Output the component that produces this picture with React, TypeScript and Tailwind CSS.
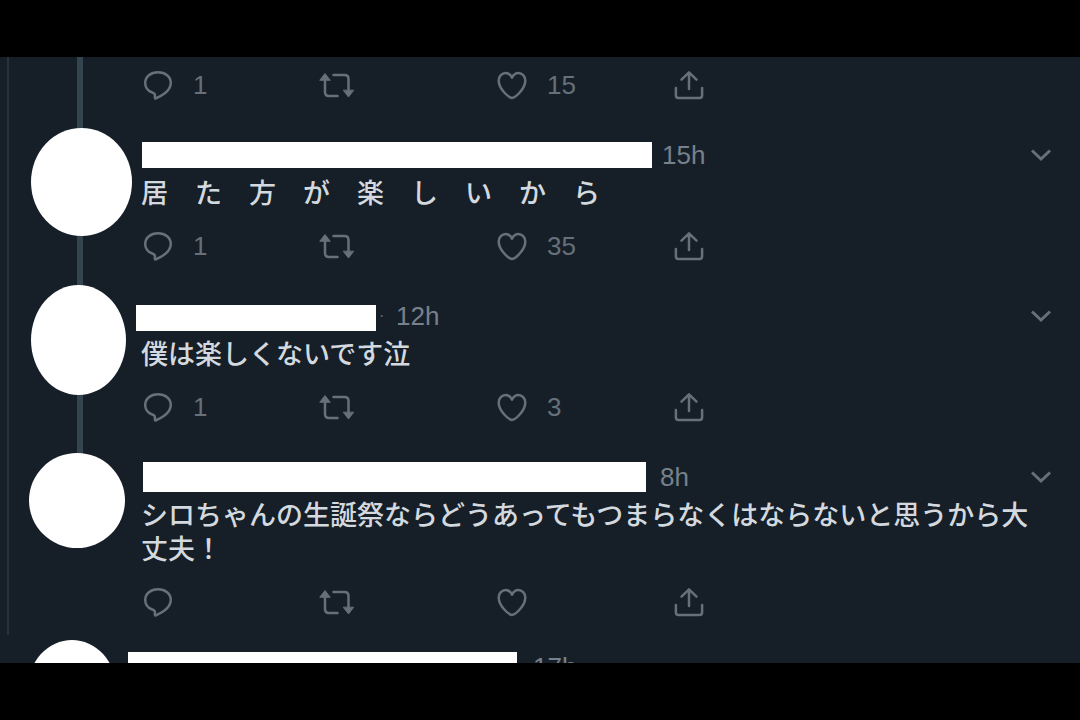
import type { ReactNode } from "react";

type Post = {
  id: string;
  time: string;
  text: string;
  replies?: number;
  likes?: number;
  separator?: boolean;
  avatar: string;
  mask: string;
  line: string;
};

const posts: Post[] = [
  {
    id: "a",
    time: "15h",
    text: "居 た 方 が 楽 し い か ら".replace(/ /g, "\u3000"),
    replies: 1,
    likes: 35,
    avatar: "mt-[10px] ml-[22px] w-[101px] h-[108px]",
    mask: "ml-px mr-[10px] w-[510px] h-[26px]",
    line: "h-full",
  },
  {
    id: "b",
    time: "12h",
    text: "僕は楽しくないです泣",
    replies: 1,
    likes: 3,
    separator: true,
    avatar: "mt-[6px] ml-[22px] w-[95px] h-[110px]",
    mask: "-ml-[5px] mt-1 w-[240px] h-[26px]",
    line: "h-full",
  },
  {
    id: "c",
    time: "8h",
    text: "シロちゃんの生誕祭ならどうあってもつまらなくはならないと思うから大丈夫！",
    avatar: "mt-[13px] ml-[20px] w-[96px] h-[95px]",
    mask: "ml-[2px] mr-[14px] w-[503px] h-[30px]",
    line: "h-[40px]",
  },
];

const icons: Record<string, ReactNode> = {
  reply: (
    <path d="M14.5 30.5c-.8 0-.6-1-.6-3.700-.2-1.300-1.500-2-3.200-2.600C6.500 22.700 4.200 19 4.200 14.800 4.200 8.600 9.700 4.200 17 4.200s12.800 4.400 12.800 10.600c0 4.700-2.600 8-6.300 10.700-2.800 2.100-5.500 3.600-9 5z" />
  ),
  repost: (
    <>
      <path d="M7 10.500v13.500c0 2.600 1.400 4 4 4h8.500M15.500 7H26.500c2.600 0 4 1.400 4 4v13" />
      <path d="M2 12l5-6.500 5 6.500zM25.500 22.500l5 6.500 5-6.500z" className="fill-current" strokeWidth="1" strokeLinejoin="round" />
    </>
  ),
  like: (
    <path d="M17 30C13 29.500 3.700 20.500 3.700 12.500 3.700 8.300 7 5 10.600 5 13.800 5 15.900 7.400 17 9.800 18.100 7.400 20.200 5 23.400 5 27 5 30.300 8.300 30.300 12.500 30.300 20.500 21 29.500 17 30z" />
  ),
  share: (
    <path d="M17 21V5M9.500 11.700L17 4.300l7.500 7.400M3.900 20v7.500c0 1.500.9 2.400 2.400 2.400h21.400c1.500 0 2.400-.9 2.400-2.400V20" />
  ),
};

function Action({ label, icon, count }: { label: string; icon: string; count?: number }) {
  return (
    <button type="button" aria-label={label} className="flex w-[177px] items-center gap-[18px] text-left">
      <svg
        viewBox="0 0 34 34"
        className="size-[34px] shrink-0 overflow-visible fill-none stroke-current"
        strokeWidth="2.500"
        strokeLinecap="round"
        strokeLinejoin="round"
      >
        {icons[icon]}
      </svg>
      {count !== undefined && <span className="text-[26px] leading-[34px]">{count}</span>}
    </button>
  );
}

function Actions({ replies, likes }: { replies?: number; likes?: number }) {
  return (
    <div className="flex text-[#66707a]">
      <Action label="Reply" icon="reply" count={replies} />
      <Action label="Retweet" icon="repost" />
      <Action label="Like" icon="like" count={likes} />
      <Action label="Share" icon="share" />
    </div>
  );
}

function Rail({ line, children }: { line: string; children?: ReactNode }) {
  return (
    <div className="relative w-[132px] shrink-0">
      <div className={`absolute top-0 left-[68px] w-[6px] bg-[#35454f] ${line}`} />
      {children}
    </div>
  );
}

function PostItem({ post }: { post: Post }) {
  return (
    <article className="flex">
      <Rail line={post.line}>
        <div className={`relative rounded-[50%] bg-white ${post.avatar}`} />
      </Rail>
      <div className="min-w-0 flex-1 pt-5 pr-7 pb-4">
        <header className="flex h-[34px] items-center">
          <div className={`shrink-0 bg-white ${post.mask}`} />
          {post.separator && <span className="w-5 pl-[3px] text-[#66707a]">·</span>}
          <time className="text-[26px] leading-[34px] text-[#77818b]">{post.time}</time>
          <button type="button" aria-label="More" className="ml-auto text-[#66707a]">
            <svg viewBox="0 0 22 14" className="h-[14px] w-[22px] fill-none stroke-current stroke-[3]">
              <path d="M2 2.500l9 8.500 9-8.500" />
            </svg>
          </button>
        </header>
        <p className="mt-[5px] mb-[18px] text-[27px] leading-[34px] font-medium text-[#d3d9df]">{post.text}</p>
        <Actions replies={post.replies} likes={post.likes} />
      </div>
    </article>
  );
}

export default function App() {
  return (
    <div className="h-screen bg-black py-[57px] font-['Liberation_Sans','Noto_Sans_CJK_JP',sans-serif]">
      <main className="h-full overflow-hidden bg-[#161f28]">
        <section className="ml-[7px] border-l-2 border-[#26323c]">
          <div className="flex">
            <Rail line="h-full" />
            <div className="min-w-0 flex-1 pt-[11px] pb-4">
              <Actions replies={1} likes={15} />
            </div>
          </div>
          {posts.map((post) => (
            <PostItem key={post.id} post={post} />
          ))}
        </section>
        <article className="flex items-start pt-[5px] pl-7">
          <div className="h-[96px] w-[88px] shrink-0 rounded-[50%] bg-white" />
          <header className="ml-3 flex items-center gap-4 pt-[10px]">
            <div className="h-[30px] w-[389px] bg-white" />
            <time className="text-[26px] leading-[34px] text-[#77818b]">17h</time>
          </header>
        </article>
      </main>
    </div>
  );
}
